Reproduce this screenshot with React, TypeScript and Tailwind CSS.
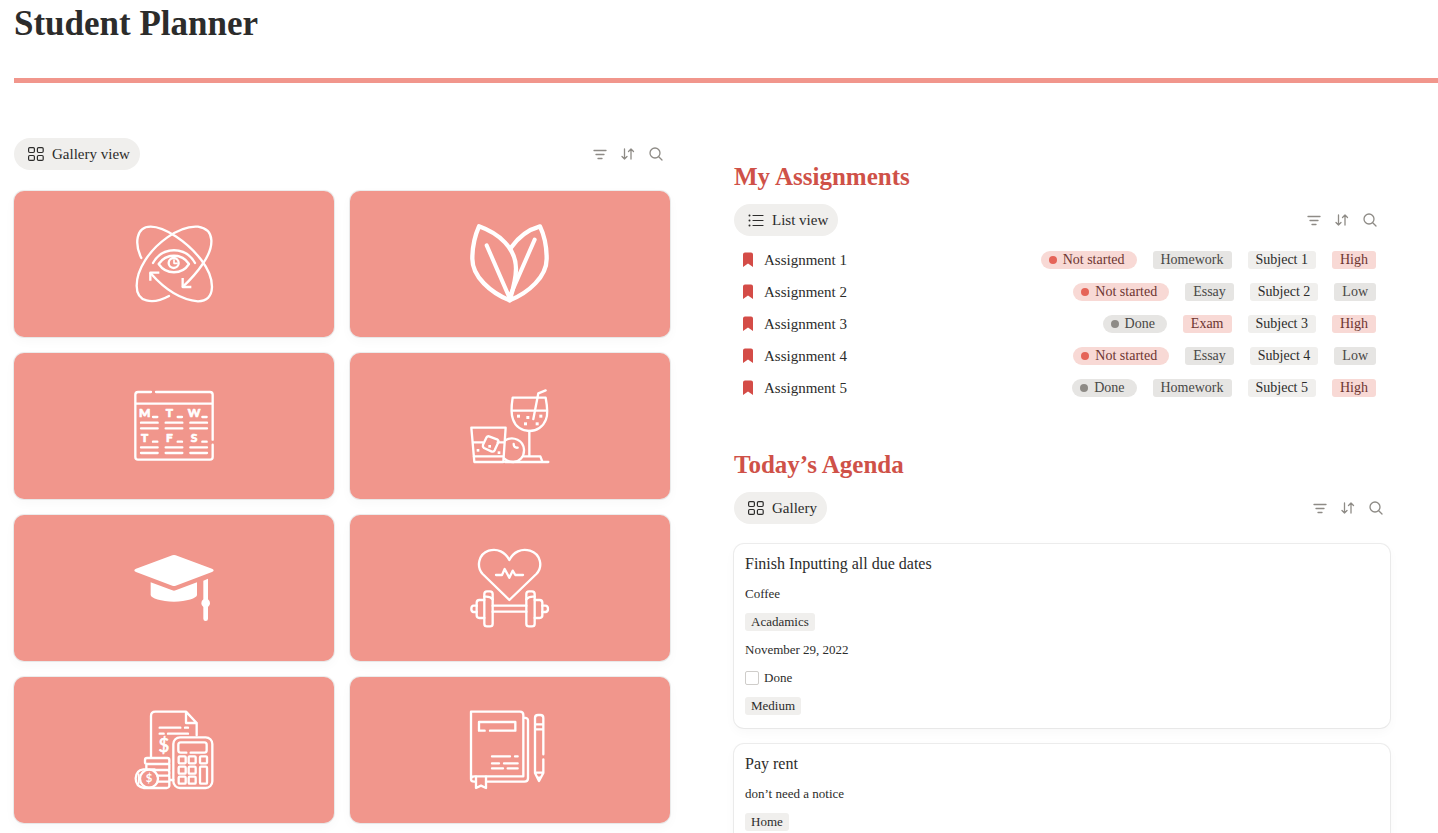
import React from "react";
import clsx from "clsx";

type Tone = "red" | "gray" | "light";

interface Assignment {
  name: string;
  status: "Not started" | "Done";
  kind: string;
  kindTone: Tone;
  subject: string;
  priority: "High" | "Low";
}

interface AgendaItem {
  title: string;
  note: string;
  area: string;
  date?: string;
  priority?: string;
}

const assignments: Assignment[] = [
  { name: "Assignment 1", status: "Not started", kind: "Homework", kindTone: "gray", subject: "Subject 1", priority: "High" },
  { name: "Assignment 2", status: "Not started", kind: "Essay", kindTone: "gray", subject: "Subject 2", priority: "Low" },
  { name: "Assignment 3", status: "Done", kind: "Exam", kindTone: "red", subject: "Subject 3", priority: "High" },
  { name: "Assignment 4", status: "Not started", kind: "Essay", kindTone: "gray", subject: "Subject 4", priority: "Low" },
  { name: "Assignment 5", status: "Done", kind: "Homework", kindTone: "gray", subject: "Subject 5", priority: "High" },
];

const agenda: AgendaItem[] = [
  { title: "Finish Inputting all due dates", note: "Coffee", area: "Acadamics", date: "November 29, 2022", priority: "Medium" },
  { title: "Pay rent", note: "don’t need a notice", area: "Home" },
];

const toneClasses: Record<Tone, string> = {
  red: "bg-[#f8d9d5] text-[#6d3531]",
  gray: "bg-[#e6e5e3] text-[#494846]",
  light: "bg-[#f0efed] text-[#2c2c2b]",
};

/* ---------- cover drawings ---------- */

const Cover: React.FC<{ width?: number; children: React.ReactNode }> = ({
  width = 7,
  children,
}) => (
  <svg
    viewBox="0 0 300 300"
    className="size-25"
    fill="none"
    stroke="white"
    strokeWidth={width}
    strokeLinecap="round"
    strokeLinejoin="round"
    aria-hidden="true"
  >
    {children}
  </svg>
);

const MindCover = () => (
  <Cover>
    <path d="M52 132C32 92 34 38 80 38C122 38 190 84 232 138C276 196 276 262 222 262C172 258 122 226 80 178" />
    <path d="M79 200V176H106" strokeLinecap="butt" />
    <path d="M135 246C84 274 38 264 38 215C38 166 76 108 130 70C164 46 198 36 222 38C274 46 272 98 236 150C216 180 196 200 177 218" />
    <path d="M176 192V219H202" strokeLinecap="butt" />
    <path d="M87 147C116 96 184 96 213 147" />
    <path d="M104 150C126 117 174 117 195 150C174 183 126 183 104 150Z" />
    <circle cx="149" cy="147" r="15" />
    <path d="M150 138v10h9" strokeWidth="5" />
  </Cover>
);

const LeafCover = () => (
  <Cover width={13}>
    <path d="M57 37C116 58 168 102 168 164C168 196 158 230 149 259C92 236 37 188 37 134C37 98 46 62 57 37Z" />
    <path d="M154 100C176 68 208 46 240 37C252 62 260 98 260 134C260 188 206 236 149 259" />
    <path d="M80 94L148 250L224 77" strokeWidth="12" />
  </Cover>
);

const weekCells = [
  { letter: "M", x: 48, y: 124 },
  { letter: "T", x: 122, y: 124 },
  { letter: "W", x: 196, y: 124 },
  { letter: "T", x: 48, y: 198 },
  { letter: "F", x: 122, y: 198 },
  { letter: "S", x: 196, y: 198 },
];

const WeekCover = () => (
  <Cover>
    <path d="M81 48H42Q34 48 34 56V243Q34 251 42 251H258Q266 251 266 243V206M266 191V56Q266 48 258 48H96M34 83H266" />
    {weekCells.map(({ letter, x, y }) => (
      <g key={`${letter}${x}${y}`}>
        <text
          x={x + 14}
          y={y}
          textAnchor="middle"
          fill="white"
          stroke="white"
          strokeWidth="2"
          fontFamily="Lato, sans-serif"
          fontWeight="900"
          fontSize="36"
        >
          {letter}
        </text>
        <path d={`M${x + 39} ${y - 1}h13M${x + 3} ${y + 16}h50M${x + 3} ${y + 33}h50`} />
      </g>
    ))}
  </Cover>
);

const DrinksCover = () => (
  <Cover>
    <path d="M158 65H257C262 92 264 116 258 130C250 152 230 165 208 165C186 165 166 152 159 130C152 112 154 90 158 65ZM157 104H260" />
    <path d="M220 129L235 52L257 43M208 165V239M191 241H241L247 257M135 258H265" />
    <path d="M34 155H137L130 258H43ZM38 199H68M113 199H133M41 241H130" />
    <path d="M87 181L111 190Q117 194 115 199L104 223Q100 229 94 226L72 216Q67 212 69 206L79 185Q82 180 87 181Z" />
    <path d="M136 193C160 178 191 194 192 221C193 243 178 257 160 258C148 258 139 254 132 247M161 204C161 212 165 216 173 215" />
    <g fill="white" stroke="none">
      <rect x="171" y="116" width="9" height="9" />
      <rect x="199" y="120" width="9" height="9" />
      <rect x="238" y="116" width="9" height="9" />
      <rect x="192" y="139" width="9" height="9" />
      <rect x="227" y="139" width="9" height="9" />
      <rect x="50" y="219" width="8" height="8" />
      <rect x="85" y="207" width="8" height="8" />
      <rect x="113" y="226" width="8" height="8" />
    </g>
  </Cover>
);

const SchoolCover = () => (
  <Cover>
    <g fill="white" stroke="none">
      <path d="M145 52Q150 50 155 52L264 92Q274 97 264 102L155 143Q150 145 145 143L36 102Q26 97 36 92Z" />
      <path d="M80 133L145 157Q150 159 155 157L219 133V171C219 180 188 191 150 191C112 191 80 180 80 171Z" />
      <path d="M238 128L252 122V184A14 14 0 0 1 252 207V242A7 7 0 0 1 238 242V207A14 14 0 0 1 238 184Z" />
    </g>
  </Cover>
);

const FitnessCover = () => (
  <Cover>
    <path d="M148 186L68 108C48 86 56 48 86 38C112 30 136 42 148 66C160 42 184 30 210 38C242 48 250 86 229 108Z" />
    <path d="M108 111H126L134 93L148 119L158 98L166 111H189" />
    <rect x="73" y="160" width="25" height="105" rx="8" />
    <rect x="199" y="160" width="25" height="105" rx="8" />
    <path d="M73 186H58Q50 186 50 194V232Q50 240 58 240H73M224 186H239Q247 186 247 194V232Q247 240 239 240H224" />
    <path d="M50 203H41Q34 203 34 213Q34 222 41 222H50M247 203H256Q264 203 264 213Q264 222 256 222H247M98 203H199M98 221H199M73 176Q90 174 98 184M199 184Q207 174 224 176" />
  </Cover>
);

const FinanceCover = () => (
  <Cover>
    <path d="M81 170V48Q81 35 94 35H186L218 69V106M186 35V69H218" />
    <path d="M107 83H169M183 83H192M107 101H119M132 101H192" />
    <text
      x="120"
      y="156"
      textAnchor="middle"
      fill="white"
      stroke="white"
      strokeWidth="2"
      fontFamily="Lato, sans-serif"
      fontSize="56"
    >
      $
    </text>
    <rect x="148" y="112" width="117" height="152" rx="20" />
    <path d="M187 158H170Q163 158 163 151V134Q163 127 170 127H241Q248 127 248 134V151Q248 158 241 158H200" />
    {[174, 204, 238].map((x) => (
      <rect key={x} x={x - 10} y="169" width="21" height="21" rx="3" />
    ))}
    {[174, 204].map((x) => (
      <React.Fragment key={x}>
        <rect x={x - 10} y="200" width="21" height="21" rx="3" />
        <rect x={x - 10} y="230" width="21" height="21" rx="3" />
      </React.Fragment>
    ))}
    <rect x="228" y="200" width="21" height="51" rx="3" />
    <path d="M69 174H130Q136 174 136 180V187Q136 192 130 192H69Q63 192 63 187V180Q63 174 69 174ZM90 210H130Q136 210 136 216V222Q136 227 130 227H100M136 192V210M67 192V207M101 227H136V245H101M136 245V258Q134 264 128 264H60Q35 260 35 235Q36 211 58 208H92M136 240H148" />
    <circle cx="75" cy="236" r="27" />
    <path d="M44 222V250" strokeWidth="5" />
    <text
      x="75"
      y="247"
      textAnchor="middle"
      fill="white"
      stroke="none"
      fontFamily="Lato, sans-serif"
      fontWeight="700"
      fontSize="34"
    >
      $
    </text>
  </Cover>
);

const JournalCover = () => (
  <Cover>
    <path d="M33 35H180Q190 35 190 45V229H43Q33 229 33 238V35M33 238Q33 245 43 245H46M82 245H193Q204 245 204 235V61Q204 53 190 53" />
    <path d="M48 230V264L63 257L78 264V230" />
    <path d="M74 92H57V66H166V92H90M96 169H150M165 169H173M96 190H117M132 190H173M96 205H129M143 205H173" />
    <path d="M250 163V54Q250 45 241 45H234Q225 45 225 54V219L237 243L250 219V178M225 73H250M225 88H250M225 218H250M233 233H241" />
  </Cover>
);

const covers = [
  { label: "Mind", Art: MindCover },
  { label: "Nature", Art: LeafCover },
  { label: "Week", Art: WeekCover },
  { label: "Social", Art: DrinksCover },
  { label: "School", Art: SchoolCover },
  { label: "Fitness", Art: FitnessCover },
  { label: "Finance", Art: FinanceCover },
  { label: "Journal", Art: JournalCover },
];

/* ---------- toolbar ---------- */

const GridIcon = () => (
  <svg viewBox="0 0 20 20" className="size-5" fill="none" stroke="currentColor" strokeWidth="1.2" aria-hidden="true">
    <rect x="2.6" y="3.6" width="5.8" height="4.9" rx="1.2" />
    <rect x="11.4" y="3.6" width="5.8" height="4.9" rx="1.2" />
    <rect x="2.6" y="11.5" width="5.8" height="4.9" rx="1.2" />
    <rect x="11.4" y="11.5" width="5.8" height="4.9" rx="1.2" />
  </svg>
);

const ListIcon = () => (
  <svg viewBox="0 0 20 20" className="size-5" fill="none" stroke="currentColor" strokeWidth="1.2" strokeLinecap="round" aria-hidden="true">
    <path d="M7 5.5H17M7 10.5H17M7 15.5H17" />
    <path d="M3.5 5.5h.01M3.5 10.5h.01M3.5 15.5h.01" strokeWidth="2" />
  </svg>
);

const actions = [
  { label: "Filter", path: "M2 4.5H14M4 8.5H12M6 12.5H10" },
  { label: "Sort", path: "M4.5 3V13M2 10.5L4.5 13L7 10.5M11 13V3M8.5 5.5L11 3L13.5 5.5" },
  { label: "Search", path: "M12 7A5 5 0 1 1 2 7A5 5 0 1 1 12 7ZM10.7 10.7L14 14" },
];

interface ToolbarProps {
  view: string;
  icon: React.ReactNode;
  className?: string;
}

const Toolbar: React.FC<ToolbarProps> = ({ view, icon, className }) => (
  <div className={clsx("flex h-8 items-center justify-between", className)}>
    <button
      type="button"
      className="flex h-8 items-center gap-1.5 rounded-full bg-[#f0efed] pr-2.5 pl-3 text-[15px] text-[#2c2c2b]"
    >
      {icon}
      {view}
    </button>
    <div className="flex text-[#8e8b86]">
      {actions.map(({ label, path }) => (
        <button key={label} type="button" aria-label={label} className="flex size-7 items-center justify-center">
          <svg
            viewBox="0 0 16 16"
            className="size-4"
            fill="none"
            stroke="currentColor"
            strokeWidth="1.3"
            strokeLinecap="round"
            strokeLinejoin="round"
            aria-hidden="true"
          >
            <path d={path} />
          </svg>
        </button>
      ))}
    </div>
  </div>
);

/* ---------- list and cards ---------- */

const Tag: React.FC<{ tone: Tone; children: React.ReactNode }> = ({ tone, children }) => (
  <span className={clsx("flex h-[18px] items-center rounded-[3px] px-2", toneClasses[tone])}>
    {children}
  </span>
);

const Status: React.FC<{ value: Assignment["status"] }> = ({ value }) => {
  const done = value === "Done";
  return (
    <span
      className={clsx(
        "flex h-[18px] items-center gap-1.5 rounded-full pr-3 pl-2",
        toneClasses[done ? "gray" : "red"]
      )}
    >
      <span className={clsx("size-2 rounded-full", done ? "bg-[#8e8b86]" : "bg-[#e56458]")} />
      {value}
    </span>
  );
};

const AssignmentRow: React.FC<{ item: Assignment }> = ({ item }) => (
  <li className="flex h-8 items-center justify-between pr-3.5 pl-2">
    <a href="#" className="flex items-center gap-2.5 text-[15px]">
      <svg viewBox="0 0 12 16" className="h-4 w-3" fill="#d44c47" aria-hidden="true">
        <path d="M1 2.5Q1 0.5 3 0.5H9Q11 0.5 11 2.5V15L6 11.5L1 15Z" />
      </svg>
      {item.name}
    </a>
    <div className="flex items-center gap-4 text-sm">
      <Status value={item.status} />
      <Tag tone={item.kindTone}>{item.kind}</Tag>
      <Tag tone="light">{item.subject}</Tag>
      <Tag tone={item.priority === "High" ? "red" : "gray"}>{item.priority}</Tag>
    </div>
  </li>
);

const cardTag = "rounded-[3px] bg-[#f0efed] px-1.5 leading-[18px]";

const AgendaCard: React.FC<{ item: AgendaItem }> = ({ item }) => (
  <article className="rounded-[10px] px-[11px] pt-1 pb-2 text-[13px] shadow-[0_4px_12px_rgba(0,0,0,0.03),0_0_0_1px_rgba(0,0,0,0.07)]">
    <h3 className="text-base leading-8">{item.title}</h3>
    <p className="leading-7">{item.note}</p>
    <div className="flex h-7 items-center">
      <span className={cardTag}>{item.area}</span>
    </div>
    {item.date && (
      <>
        <p className="leading-7">{item.date}</p>
        <label className="flex h-7 items-center gap-[5px]">
          <input
            type="checkbox"
            className="size-3.5 appearance-none rounded-[2px] border border-[#cfcdca] bg-white checked:bg-[#d44c47]"
          />
          Done
        </label>
      </>
    )}
    {item.priority && (
      <div className="flex h-7 items-center">
        <span className={cardTag}>{item.priority}</span>
      </div>
    )}
  </article>
);

const SectionTitle: React.FC<{ children: React.ReactNode }> = ({ children }) => (
  <h2 className="mb-[11px] text-[25px] leading-8 font-bold text-[#cf5148]">{children}</h2>
);

const App: React.FC = () => {
  return (
    <main className="bg-white pl-3.5 font-['Liberation_Serif',serif] text-[#2c2c2b]">
      <h1 className="pt-1 text-[35px] leading-10 font-bold">Student Planner</h1>
      <hr className="mt-[34px] border-t-[5px] border-[#f1968c]" />

      <div className="grid grid-cols-2 gap-16 pt-[55px] pr-12">
        <section>
          <Toolbar view="Gallery view" icon={<GridIcon />} />
          <div className="mt-[21px] grid grid-cols-2 gap-4">
            {covers.map(({ label, Art }) => (
              <a
                key={label}
                href="#"
                aria-label={label}
                className="flex h-[146px] items-center justify-center rounded-[10px] bg-[#f1968c] shadow-[0_4px_12px_rgba(0,0,0,0.03),0_0_0_1px_rgba(0,0,0,0.07)]"
              >
                <Art />
              </a>
            ))}
          </div>
        </section>

        <div className="pt-[23px]">
          <section>
            <SectionTitle>My Assignments</SectionTitle>
            <Toolbar view="List view" icon={<ListIcon />} className="pr-1.5" />
            <ul className="mt-2">
              {assignments.map((item) => (
                <AssignmentRow key={item.name} item={item} />
              ))}
            </ul>
          </section>

          <section className="mt-[45px]">
            <SectionTitle>Today’s Agenda</SectionTitle>
            <Toolbar view="Gallery" icon={<GridIcon />} />
            <div className="mt-5 flex flex-col gap-4">
              {agenda.map((item) => (
                <AgendaCard key={item.title} item={item} />
              ))}
            </div>
          </section>
        </div>
      </div>
    </main>
  );
};

export default App;
